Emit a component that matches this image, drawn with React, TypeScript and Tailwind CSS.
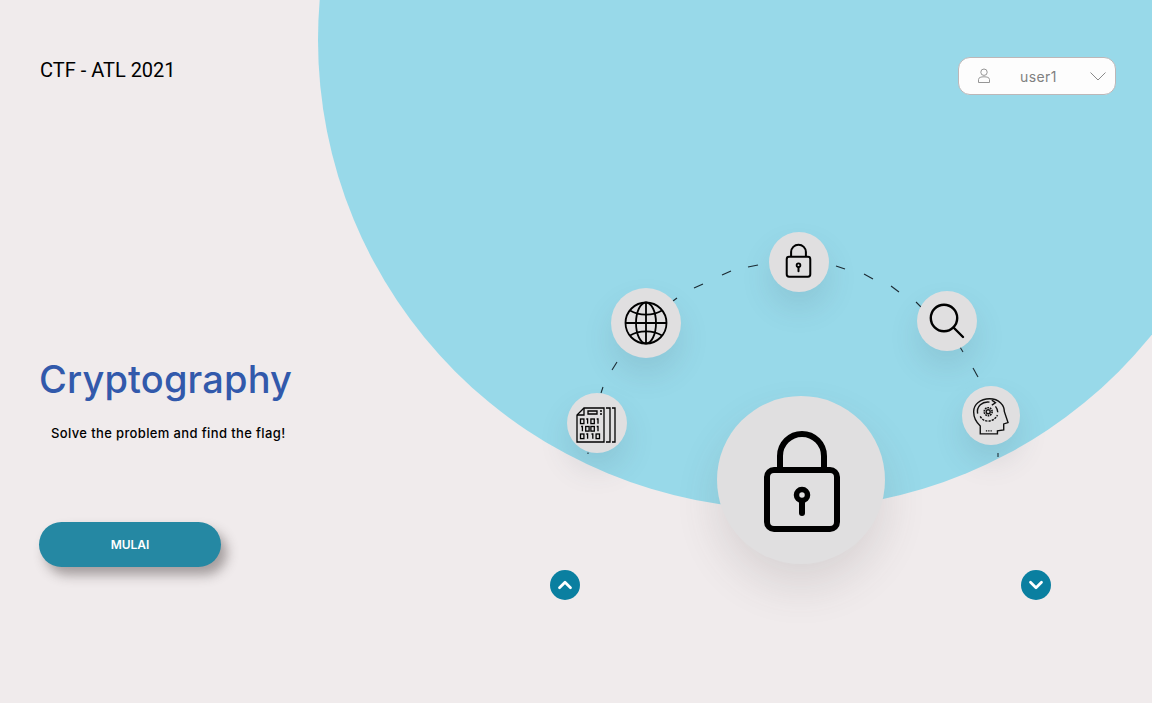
import React from 'react';
import { ChevronDown, ChevronUp } from 'lucide-react';

const dashes = [
  [588, 452.5, 588, 454],
  [601, 393, 603, 387],
  [612, 370, 617, 362],
  [673, 301, 677, 298],
  [694, 288, 703, 284],
  [722, 275, 731, 271],
  [748, 267, 758, 265],
  [836, 266, 845, 269],
  [864, 274, 873, 279],
  [891, 286, 899, 292],
  [916, 302, 921, 307],
  [960, 347, 963, 352],
  [973, 368, 978, 377],
  [998, 453, 998, 457],
];

const LockIcon = ({ className }: { className: string }) => (
  <svg viewBox="0 0 80 104" fill="none" stroke="black" strokeWidth="6" className={className}>
    <path d="M18 41V27a22 22 0 0 1 44 0V41" />
    <rect x="5" y="41" width="70" height="59" rx="7" />
    <circle cx="40" cy="66" r="5.5" strokeWidth="5.5" />
    <path d="M40 72V84" strokeLinecap="round" />
  </svg>
);

const GlobeIcon = () => (
  <svg viewBox="0 0 44 44" fill="none" stroke="black" strokeWidth="1.8" className="w-[44px] h-[44px]">
    <circle cx="22" cy="22" r="20.5" />
    <ellipse cx="22" cy="22" rx="10" ry="20.5" />
    <path d="M22 1.5V42.5M1.5 22H42.5" />
    <path d="M6 9.5C15 15 29 15 38 9.5M6 34.5C15 29 29 29 38 34.5" />
  </svg>
);

const SearchIcon = () => (
  <svg viewBox="0 0 36 36" fill="none" stroke="black" strokeWidth="2.4" strokeLinecap="round" className="w-[36px] h-[36px]">
    <circle cx="15" cy="15" r="13.2" />
    <path d="M24.5 24.5L34 34" />
  </svg>
);

const bitRows = ['0101', '1001', '0110'];

const FileIcon = () => (
  <svg viewBox="0 0 40 36" fill="none" stroke="black" strokeWidth="1.3" className="w-[40px] h-[36px] mr-[3px] mt-[3px]">
    <path d="M8 1H28V35H1V8Z" />
    <path d="M8 1V8H1" />
    <path d="M12 4H21V7H12ZM24 4H26M24 7H26" />
    {bitRows.map((row, r) =>
      row.split('').map((bit, c) => {
        const x = 4.5 + c * 5.2;
        const y = 12 + r * 7.5;
        return bit === '0' ? (
          <rect key={`${r}-${c}`} x={x} y={y} width="3.4" height="4.6" />
        ) : (
          <path key={`${r}-${c}`} d={`M${x + 0.6} ${y}H${x + 1.9}V${y + 4.8}`} />
        );
      }),
    )}
    <path d="M30 1H34V35H30M36 1H39V35H36" />
  </svg>
);

const HeadIcon = () => (
  <svg viewBox="95 165 115 120" fill="none" stroke="#111" strokeWidth="4.2" className="w-[38px] h-[40px]">
    <path d="M120 279V255C106 242 100 228 100 212C100 190 120 173 148 173C178 173 193 193 193 212L204 245L191 249V267L172 270V279Z" />
    <path d="M112 218C108 196 126 180 148 183" />
    <path d="M155 177L166 185L155 192" />
    <circle cx="144" cy="212" r="6" />
    <circle cx="144" cy="212" r="12" strokeDasharray="5 2.5" strokeWidth="5" />
    <path d="M120 226C130 246 160 246 172 222" strokeDasharray="7 3" />
    <path d="M166 196C171 202 173 208 173 214" />
    <path d="M137 270H158" strokeDasharray="4 3" />
  </svg>
);

const nodeClass =
  'absolute flex items-center justify-center rounded-full bg-[#e0dfe0] shadow-[0_16px_30px_rgba(60,80,90,0.13)]';

export default function App() {
  return (
    <div className="relative w-full h-[703px] overflow-hidden bg-[#f0ebec]">
      {/* Background circle */}
      <div className="absolute left-[318px] top-[-429px] w-[938px] h-[938px] rounded-full bg-[#98d9e9]"></div>

      {/* Diagram */}
      <svg className="absolute inset-0 w-[1152px] h-[703px]" viewBox="0 0 1152 703" fill="none">
        {dashes.map(([x1, y1, x2, y2]) => (
          <line key={`${x1}-${y1}`} x1={x1} y1={y1} x2={x2} y2={y2} stroke="#1c2b33" strokeWidth="1.1" />
        ))}
      </svg>
      <div className={`${nodeClass} left-[769px] top-[232px] w-[60px] h-[60px]`}>
        <LockIcon className="w-[27px] h-[35px] mr-[1px] mb-[3px]" />
      </div>
      <div className={`${nodeClass} left-[611px] top-[288px] w-[70px] h-[70px]`}>
        <GlobeIcon />
      </div>
      <div className={`${nodeClass} left-[917px] top-[291px] w-[60px] h-[60px]`}>
        <SearchIcon />
      </div>
      <div className={`${nodeClass} left-[962px] top-[386px] w-[58px] h-[59px]`}>
        <HeadIcon />
      </div>
      <div className={`${nodeClass} left-[567px] top-[393px] w-[60px] h-[60px]`}>
        <FileIcon />
      </div>
      <div className="absolute left-[717px] top-[396px] w-[168px] h-[168px] flex items-center justify-center rounded-full bg-[#e0dfe0] shadow-[0_22px_44px_rgba(80,70,70,0.14)]">
        <LockIcon className="w-[80px] h-[104px] ml-[1px] mt-[1px]" />
      </div>
      <button className="absolute left-[550px] top-[570px] w-[30px] h-[30px] flex items-center justify-center rounded-full bg-[#0a7fa0] text-white">
        <ChevronUp size={22} strokeWidth={3} />
      </button>
      <button className="absolute left-[1021px] top-[570px] w-[30px] h-[30px] flex items-center justify-center rounded-full bg-[#0a7fa0] text-white">
        <ChevronDown size={22} strokeWidth={3} />
      </button>

      {/* Header */}
      <header className="relative flex items-start justify-between pt-[57px] pl-[40px] pr-[36px]">
        <h1 className="font-['Roboto',sans-serif] text-[20px] leading-[26px] text-black">CTF - ATL 2021</h1>
        <div className="flex items-center w-[158px] h-[38px] pl-[18px] pr-[9px] rounded-[12px] border border-[#bdb7b8] bg-[#fdfdfd]">
          <svg viewBox="0 0 14 16" fill="none" stroke="#8a8a8a" strokeWidth="0.9" className="w-[14px] h-[16px]">
            <circle cx="7" cy="4.2" r="3.2" />
            <path d="M1.5 14.5V11.5C1.5 9.5 4 8.8 7 8.8C10 8.8 12.5 9.5 12.5 11.5V14.5Z" />
          </svg>
          <span className="ml-[29px] font-['Inter',sans-serif] text-[14px] tracking-[0.4px] text-[#808080]">user1</span>
          <svg viewBox="0 0 16 9" fill="none" stroke="#8a8a8a" strokeWidth="1" className="ml-auto w-[16px] h-[9px]">
            <path d="M0.5 0.5L8 8L15.5 0.5" />
          </svg>
        </div>
      </header>

      {/* Intro */}
      <main className="relative flex flex-col items-start pl-[39px] pt-[261px]">
        <h2 className="font-['Inter',sans-serif] font-medium text-[38px] leading-[46px] tracking-[0.15px] text-[#3259ab]">Cryptography</h2>
        <p className="mt-[22px] ml-[12px] font-['Inter',sans-serif] font-medium text-[13px] leading-[18px] tracking-[0.37px] text-black">
          Solve the problem and find the flag!
        </p>
        <button className="mt-[80px] w-[182px] h-[45px] rounded-full bg-[#2588a3] font-['Inter',sans-serif] font-semibold text-[12px] text-white shadow-[6px_8px_12px_rgba(60,50,50,0.42)]">
          MULAI
        </button>
      </main>
    </div>
  );
}
